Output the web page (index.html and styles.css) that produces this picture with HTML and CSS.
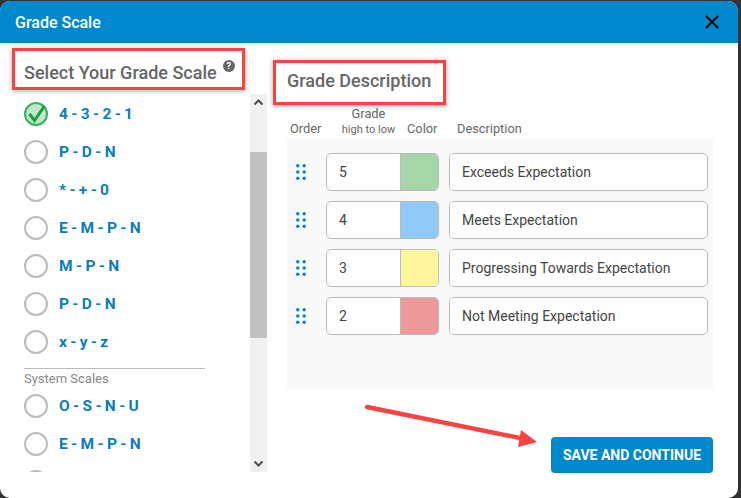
FILE: index.html
```html
<!DOCTYPE html>
<html lang="en">
  <head>
    <meta charset="UTF-8" />
    <meta name="viewport" content="width=device-width, initial-scale=1.0" />
    <title>Grade Scale</title>
    <link rel="stylesheet" href="styles.css">
  </head>
  <body>
    <div class="modal">
      <div class="modal-head">
        <span class="modal-title">Grade Scale</span>
        <svg class="close" width="16" height="16" viewBox="0 0 16 16"><path d="M2 2l12 12M14 2L2 14" stroke="#000" stroke-width="2" fill="none"/></svg>
      </div>
      <div class="modal-body">
        <div class="side">
          <div class="side-title">Select Your Grade Scale<span class="help">?</span></div>
          <div class="scale-wrap">
            <ul class="scales">
              <li class="checked">
                <svg class="check" width="26" height="26" viewBox="0 0 26 26"><circle cx="13" cy="13" r="11" fill="#c1e6c8" stroke="#35b45a" stroke-width="2"/><path d="M6.5 13l5 6.5L21.5 5" fill="none" stroke="#17a043" stroke-width="3"/></svg>
                4 - 3 - 2 - 1
              </li>
              <li><span class="radio"></span>P - D - N</li>
              <li><span class="radio"></span>* - + - 0</li>
              <li><span class="radio"></span>E - M - P - N</li>
              <li><span class="radio"></span>M - P - N</li>
              <li><span class="radio"></span>P - D - N</li>
              <li><span class="radio"></span>x - y - z</li>
              <li class="group">System Scales</li>
              <li><span class="radio"></span>O - S - N - U</li>
              <li><span class="radio"></span>E - M - P - N</li>
              <li><span class="radio"></span></li>
            </ul>
            <div class="scrollbar">
              <svg width="17" height="17" viewBox="0 0 17 17"><path d="M4.5 10.5l4-4 4 4" fill="none" stroke="#505050" stroke-width="2"/></svg>
              <div class="track"><div class="thumb"></div></div>
              <svg width="17" height="17" viewBox="0 0 17 17"><path d="M4.5 6.5l4 4 4-4" fill="none" stroke="#505050" stroke-width="2"/></svg>
            </div>
          </div>
        </div>
        <div class="main">
          <h2 class="main-title">Grade Description</h2>
          <div class="cols">
            <span class="col-order">Order</span>
            <span class="col-grade">Grade<small>high to low</small></span>
            <span class="col-color">Color</span>
            <span class="col-desc">Description</span>
          </div>
          <div class="panel">
            <div class="row">
              <svg class="grip" width="10" height="16" viewBox="0 0 10 16"><g fill="#0a88cf"><circle cx="1.8" cy="1.8" r="1.8"/><circle cx="8.2" cy="1.8" r="1.8"/><circle cx="1.8" cy="8" r="1.8"/><circle cx="8.2" cy="8" r="1.8"/><circle cx="1.8" cy="14.2" r="1.8"/><circle cx="8.2" cy="14.2" r="1.8"/></g></svg>
              <div class="grade"><span class="num">5</span><span class="swatch green"></span></div>
              <div class="desc">Exceeds Expectation</div>
            </div>
            <div class="row">
              <svg class="grip" width="10" height="16" viewBox="0 0 10 16"><g fill="#0a88cf"><circle cx="1.8" cy="1.8" r="1.8"/><circle cx="8.2" cy="1.8" r="1.8"/><circle cx="1.8" cy="8" r="1.8"/><circle cx="8.2" cy="8" r="1.8"/><circle cx="1.8" cy="14.2" r="1.8"/><circle cx="8.2" cy="14.2" r="1.8"/></g></svg>
              <div class="grade"><span class="num">4</span><span class="swatch blue"></span></div>
              <div class="desc">Meets Expectation</div>
            </div>
            <div class="row">
              <svg class="grip" width="10" height="16" viewBox="0 0 10 16"><g fill="#0a88cf"><circle cx="1.8" cy="1.8" r="1.8"/><circle cx="8.2" cy="1.8" r="1.8"/><circle cx="1.8" cy="8" r="1.8"/><circle cx="8.2" cy="8" r="1.8"/><circle cx="1.8" cy="14.2" r="1.8"/><circle cx="8.2" cy="14.2" r="1.8"/></g></svg>
              <div class="grade"><span class="num">3</span><span class="swatch yellow"></span></div>
              <div class="desc">Progressing Towards Expectation</div>
            </div>
            <div class="row">
              <svg class="grip" width="10" height="16" viewBox="0 0 10 16"><g fill="#0a88cf"><circle cx="1.8" cy="1.8" r="1.8"/><circle cx="8.2" cy="1.8" r="1.8"/><circle cx="1.8" cy="8" r="1.8"/><circle cx="8.2" cy="8" r="1.8"/><circle cx="1.8" cy="14.2" r="1.8"/><circle cx="8.2" cy="14.2" r="1.8"/></g></svg>
              <div class="grade"><span class="num">2</span><span class="swatch red"></span></div>
              <div class="desc">Not Meeting Expectation</div>
            </div>
          </div>
          <div class="actions">
            <button class="save">SAVE AND CONTINUE</button>
          </div>
        </div>
      </div>
      <!-- red annotations on top of the screenshot -->
      <div class="mark mark-left"></div>
      <div class="mark mark-right"></div>
      <svg class="arrow" width="190" height="50" viewBox="0 0 190 50">
        <path d="M4 3L157 34" stroke="#f84343" stroke-width="4.5" stroke-linecap="round"/>
        <path d="M158 26L174 38L155 43Z" fill="#f84343"/>
      </svg>
    </div>
  </body>
</html>
```

FILE: styles.css
```css
* {
  padding: 0;
  margin: 0;
  box-sizing: border-box;
}
html,
body {
  height: 100%;
  overflow: hidden;
}
body {
  background-color: #333;
  padding-top: 1px;
  font-family: Roboto, "Liberation Sans", sans-serif;
}
li {
  list-style: none;
}
.modal {
  position: relative;
  width: 738px;
  height: 497px;
  background-color: #fff;
  border-radius: 10px;
  overflow: hidden;
}
.modal-head {
  display: flex;
  align-items: center;
  justify-content: space-between;
  height: 42px;
  padding: 0 18px 0 15px;
  background-color: #0088cc;
}
.modal-title {
  font-size: 16px;
  font-weight: 500;
  color: #fff;
}
.modal-body {
  display: flex;
}
.side {
  width: 287px;
  padding-left: 24px;
}
.side-title {
  padding-top: 17px;
  height: 51px;
  font-size: 18px;
  font-weight: 500;
  color: #666;
  white-space: nowrap;
}
.help {
  display: inline-block;
  width: 12px;
  height: 12px;
  margin-left: 6px;
  border-radius: 50%;
  background-color: #666;
  color: #fff;
  font-size: 9px;
  font-weight: 700;
  line-height: 12px;
  text-align: center;
  vertical-align: 10px;
}
.scale-wrap {
  display: flex;
  height: 378px;
}
.scales {
  width: 226px;
  height: 378px;
  padding-top: 1px;
  overflow: hidden;
}
.scales li {
  display: flex;
  align-items: center;
  height: 38px;
  font-size: 15.5px;
  font-weight: 700;
  letter-spacing: 0.6px;
  word-spacing: -1.7px;
  color: #0a7dbd;
}
.scales li.group {
  display: block;
  height: 19px;
  width: 181px;
  margin-top: 7px;
  padding-top: 2px;
  border-top: 1px solid #bbb;
  font-size: 13px;
  font-weight: 400;
  letter-spacing: 0;
  word-spacing: 0;
  color: #888;
}
.radio {
  width: 24px;
  height: 24px;
  margin-right: 11px;
  border: 2px solid #bbb;
  border-radius: 50%;
  flex: none;
}
.check {
  margin: 0 10px 0 -1px;
  flex: none;
}
.scrollbar {
  display: flex;
  flex-direction: column;
  width: 17px;
  height: 378px;
  background-color: #f0f0f0;
}
.track {
  flex: 1;
  padding-top: 41px;
}
.thumb {
  height: 186px;
  background-color: #c1c1c1;
}
.main {
  width: 426px;
}
.main-title {
  padding-top: 27px;
  height: 65px;
  font-size: 18px;
  font-weight: 500;
  color: #666;
}
.cols {
  display: flex;
  align-items: flex-end;
  height: 30px;
  padding-bottom: 2px;
  font-size: 12.8px;
  color: #666;
}
.col-order {
  width: 50px;
  padding-left: 3px;
}
.col-grade {
  width: 63px;
  text-align: center;
}
.col-grade small {
  display: block;
  font-size: 11px;
  margin-top: 2px;
}
.col-color {
  width: 57px;
  padding-left: 7px;
}
.panel {
  height: 251px;
  padding-top: 15px;
  background-color: #f9f9f9;
}
.row {
  display: flex;
  align-items: center;
  height: 38px;
  margin-bottom: 10px;
}
.grip {
  margin-left: 9px;
  margin-right: 20px;
}
.grade {
  display: flex;
  width: 113px;
  height: 38px;
  margin-right: 10px;
  border: 1px solid #bbb;
  border-radius: 5px;
  background-color: #fff;
  overflow: hidden;
}
.num {
  width: 74px;
  padding-left: 12px;
  border-right: 1px solid #bbb;
  font-size: 14px;
  line-height: 36px;
  color: #444;
}
.swatch {
  flex: 1;
}
.green {
  background-color: #a5d6a7;
}
.blue {
  background-color: #90caf9;
}
.yellow {
  background-color: #fff59d;
}
.red {
  background-color: #ef9a9a;
}
.desc {
  width: 259px;
  height: 38px;
  padding-left: 12px;
  border: 1px solid #bbb;
  border-radius: 5px;
  background-color: #fff;
  font-size: 14px;
  line-height: 36px;
  color: #444;
}
.actions {
  display: flex;
  justify-content: flex-end;
  padding-top: 48px;
}
.save {
  width: 162px;
  height: 36px;
  border: 0;
  border-radius: 4px;
  background-color: #0088cc;
  color: #fff;
  font-family: inherit;
  font-size: 14px;
  font-weight: 700;
}
.mark {
  position: absolute;
  border: 3px solid #f84343;
  box-shadow: 0 1px 5px rgba(0, 0, 0, 0.35);
}
.mark-left {
  left: 12px;
  top: 47px;
  width: 233px;
  height: 42px;
}
.mark-right {
  left: 273px;
  top: 59px;
  width: 173px;
  height: 45px;
}
.arrow {
  position: absolute;
  left: 363px;
  top: 403px;
}
```
